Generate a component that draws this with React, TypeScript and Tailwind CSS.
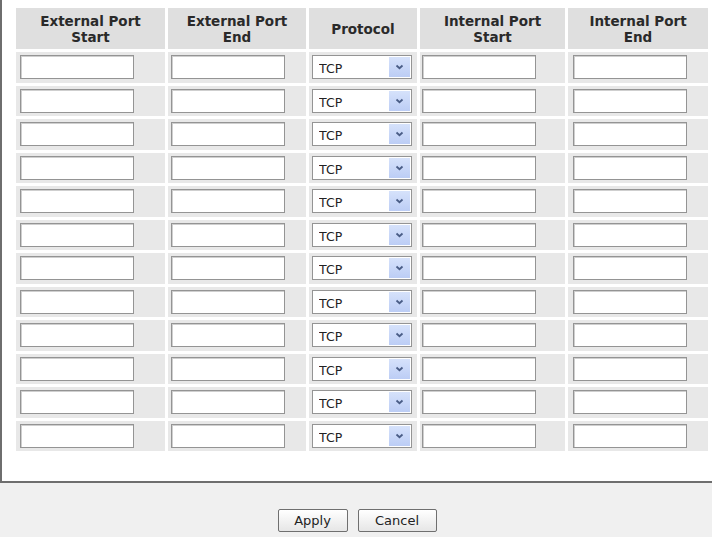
import { useState } from 'react';

const ROWS = 12;

type Rule = {
  extStart: string;
  extEnd: string;
  protocol: string;
  intStart: string;
  intEnd: string;
};

const emptyRule = (): Rule => ({ extStart: '', extEnd: '', protocol: 'TCP', intStart: '', intEnd: '' });

function PortInput({ value, onChange }: { value: string; onChange: (v: string) => void }) {
  return (
    <input
      type="text"
      value={value}
      onChange={(e) => onChange(e.target.value)}
      className="w-[114px] h-[24px] bg-white border border-[#949494] shadow-[inset_1px_1px_0_#cfcfcf] px-1 text-[12px] text-[#222] outline-none"
    />
  );
}

function ProtocolSelect({ value, onChange }: { value: string; onChange: (v: string) => void }) {
  return (
    <div className="relative w-[100px] h-[24px] bg-white border border-[#949494]">
      <select
        value={value}
        onChange={(e) => onChange(e.target.value)}
        className="appearance-none w-full h-full bg-transparent pl-[6px] text-[12.5px] text-[#222] outline-none"
      >
        <option>TCP</option>
        <option>UDP</option>
        <option>Both</option>
      </select>
      {/* dropdown button */}
      <span className="pointer-events-none absolute right-[1px] top-[1px] bottom-[1px] w-[21px] bg-gradient-to-b from-[#d6e2fb] to-[#bccdf5] flex items-center justify-center">
        <svg width="9" height="6" viewBox="0 0 9 6">
          <path d="M1.5 1.5 L4.5 4.2 L7.5 1.5" fill="none" stroke="#4a5d86" strokeWidth="1.8" />
        </svg>
      </span>
    </div>
  );
}

export default function App() {
  const [rules, setRules] = useState<Rule[]>(() => Array.from({ length: ROWS }, emptyRule));

  const update = (i: number, key: keyof Rule, v: string) =>
    setRules((rs) => rs.map((r, idx) => (idx === i ? { ...r, [key]: v } : r)));

  const headers = [
    ['External Port', 'Start'],
    ['External Port', 'End'],
    ['Protocol'],
    ['Internal Port', 'Start'],
    ['Internal Port', 'End'],
  ];

  return (
    <div className="w-[712px] h-[537px] bg-[#f0f0f0] flex flex-col font-['DejaVu_Sans',sans-serif]">
      <div className="h-[483px] shrink-0 bg-white border-l-2 border-b-2 border-[#6e6e6e] pl-[14px] pt-[8px]">
        <div className="grid grid-cols-[149px_138px_108px_145px_140px] grid-rows-[41px_repeat(12,30.5px)] gap-[3px]">
          {headers.map((lines, i) => (
            <div
              key={i}
              className="bg-[#dfdfdf] flex flex-col items-center justify-center text-[13.5px] leading-[16px] font-bold text-[#2a2a2a]"
            >
              {lines.map((l) => (
                <span key={l}>{l}</span>
              ))}
            </div>
          ))}

          {rules.map((r, i) => (
            <div key={i} className="contents">
              <div className="bg-[#e8e8e8] flex items-center pl-[4px]">
                <PortInput value={r.extStart} onChange={(v) => update(i, 'extStart', v)} />
              </div>
              <div className="bg-[#e8e8e8] flex items-center pl-[3px]">
                <PortInput value={r.extEnd} onChange={(v) => update(i, 'extEnd', v)} />
              </div>
              <div className="bg-[#e8e8e8] flex items-center pl-[3px]">
                <ProtocolSelect value={r.protocol} onChange={(v) => update(i, 'protocol', v)} />
              </div>
              <div className="bg-[#e8e8e8] flex items-center pl-[2px]">
                <PortInput value={r.intStart} onChange={(v) => update(i, 'intStart', v)} />
              </div>
              <div className="bg-[#e8e8e8] flex items-center pl-[5px]">
                <PortInput value={r.intEnd} onChange={(v) => update(i, 'intEnd', v)} />
              </div>
            </div>
          ))}
        </div>
      </div>

      {/* form actions */}
      <div className="flex justify-center gap-[10px] pt-[26px] pl-[2px]">
        <button className="w-[70px] h-[23px] rounded-[2px] border border-[#6f6f6f] bg-gradient-to-b from-white to-[#e6e6e6] text-[13px] text-[#222]">
          Apply
        </button>
        <button className="w-[79px] h-[23px] rounded-[2px] border border-[#6f6f6f] bg-gradient-to-b from-white to-[#e6e6e6] text-[13px] text-[#222]">
          Cancel
        </button>
      </div>
    </div>
  );
}
